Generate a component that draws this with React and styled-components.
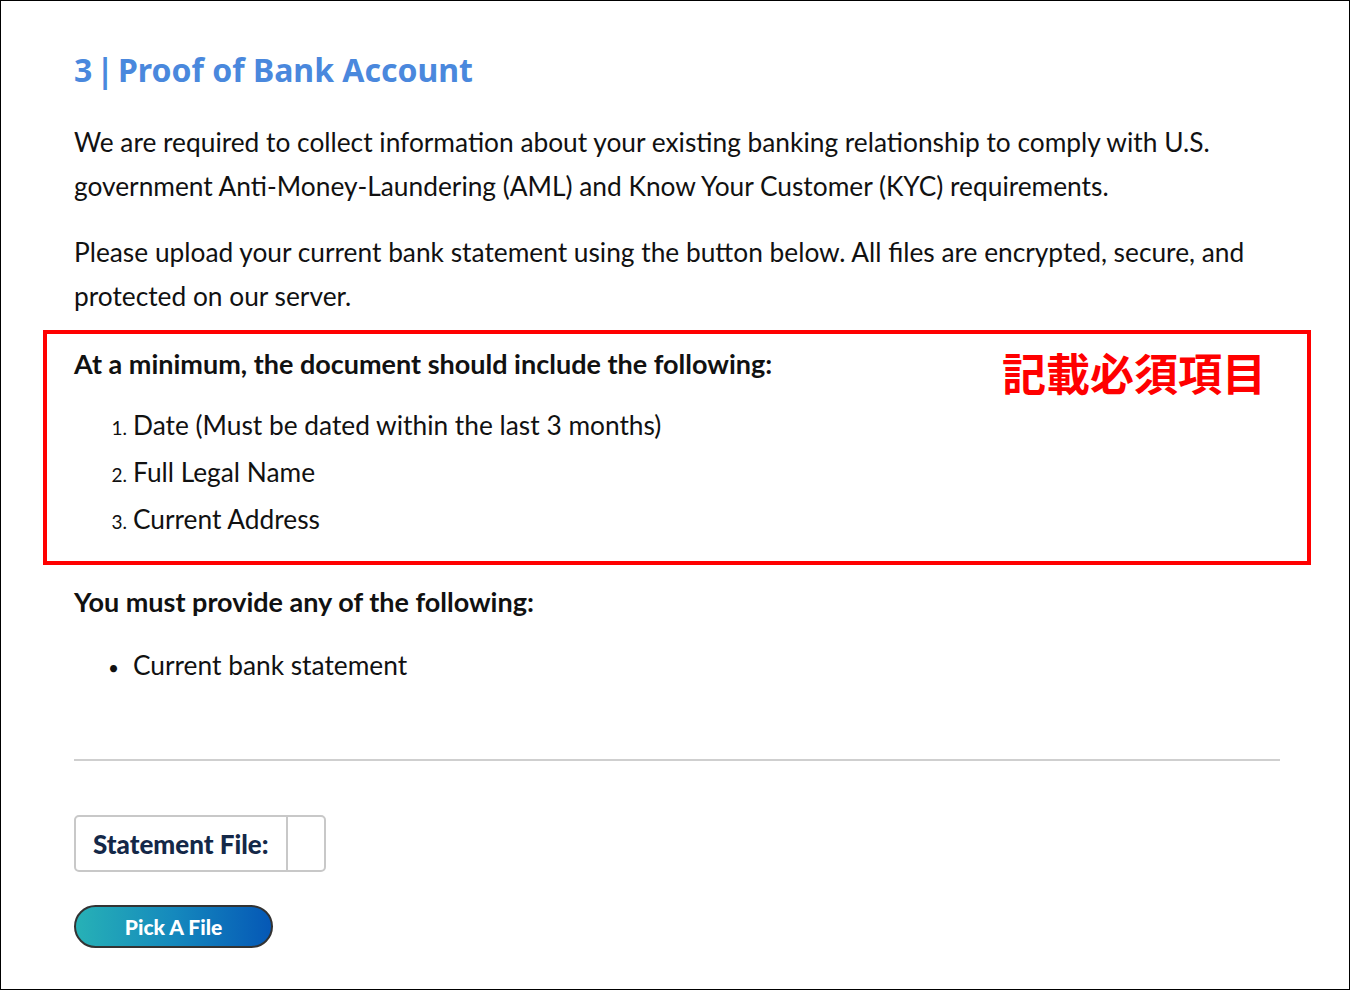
import React from "react";
import styled, { createGlobalStyle } from "styled-components";

const GlobalStyle = createGlobalStyle`
  html, body {
    margin: 0;
    padding: 0;
    background: #fff;
  }
  * { box-sizing: border-box; }
`;

const Page = styled.div`
  width: 1350px;
  height: 990px;
  border: 1px solid #000;
  padding: 43px 30px 0 73px;
  font-family: Lato, "Open Sans", sans-serif;
  color: #111;
  overflow: hidden;
`;

const Title = styled.h2`
  margin: 0 0 24px;
  font-family: "Noto Sans", Inter, sans-serif;
  font-weight: 700;
  font-size: 32px;
  line-height: 52px;
  color: #4a88dd;
`;

const Pipe = styled.span`
  margin: 0 4px;
`;

const Paragraph = styled.p`
  margin: 0 0 ${(p) => p.$gap || 22}px;
  font-size: 26.3px;
  line-height: 44px;
`;

const Highlight = styled.div`
  position: relative;
  margin: 0 8px 0 -31px;
  padding: 10px 27px 18px;
  border: 4px solid #ff0000;
`;

const Note = styled.div`
  position: absolute;
  top: 10px;
  right: 41px;
  font-family: "Noto Sans CJK JP", sans-serif;
  font-weight: 700;
  font-size: 44px;
  line-height: 56px;
  color: #ff0000;
`;

const Heading = styled.p`
  margin: 0 0 ${(p) => p.$gap || 18}px;
  font-size: 27px;
  font-weight: 700;
  line-height: 40px;
`;

const List = styled.ul`
  margin: 0;
  padding: 0;
  list-style: none;
`;

const Item = styled.li`
  display: flex;
  align-items: baseline;
  font-size: 26.3px;
  line-height: 47px;
`;

const Marker = styled.span`
  flex: none;
  width: 59px;
  padding-right: 6px;
  font-size: 19px;
  line-height: 1;
  text-align: ${(p) => (p.$bullet ? "left" : "right")};
  padding-left: ${(p) => (p.$bullet ? "34px" : "0")};
`;

const Section = styled.div`
  margin-top: 17px;
`;

const Rule = styled.hr`
  margin: 70px 39px 0 0;
  border: none;
  border-top: 2px solid #cfcfcf;
`;

const FileField = styled.div`
  display: inline-flex;
  align-items: stretch;
  height: 57px;
  margin-top: 54px;
  border: 2px solid #c8c8c8;
  border-radius: 5px;
`;

const FieldLabel = styled.div`
  display: flex;
  align-items: center;
  padding: 0 17px 0 17px;
  font-size: 26px;
  font-weight: 900;
  color: #142848;
  border-right: 2px solid #c8c8c8;
`;

const FieldValue = styled.div`
  width: 36px;
`;

const PickButton = styled.button`
  display: block;
  width: 199px;
  height: 43px;
  margin-top: 33px;
  border: 2px solid #333;
  border-radius: 22px;
  background: linear-gradient(90deg, #27b1b6 0%, #1589bd 50%, #0558b6 100%);
  color: #fff;
  font-family: Lato, sans-serif;
  font-weight: 900;
  font-size: 21px;
  cursor: pointer;
`;

const required = [
  "Date (Must be dated within the last 3 months)",
  "Full Legal Name",
  "Current Address",
];

export default function App() {
  return (
    <>
      <GlobalStyle />
      <Page>
        <Title>
          3<Pipe>|</Pipe>Proof of Bank Account
        </Title>
        <Paragraph>
          We are required to collect information about your existing banking relationship to comply with U.S.
          government Anti-Money-Laundering (AML) and Know Your Customer (KYC) requirements.
        </Paragraph>
        <Paragraph $gap={12}>
          Please upload your current bank statement using the button below. All files are encrypted, secure, and
          protected on our server.
        </Paragraph>
        <Highlight>
          <Note>記載必須項目</Note>
          <Heading>At a minimum, the document should include the following:</Heading>
          <List as="ol">
            {required.map((text, i) => (
              <Item key={text}>
                <Marker>{i + 1}.</Marker>
                {text}
              </Item>
            ))}
          </List>
        </Highlight>
        <Section>
          <Heading $gap={20}>You must provide any of the following:</Heading>
          <List>
            <Item>
              <Marker $bullet>•</Marker>
              Current bank statement
            </Item>
          </List>
        </Section>
        <Rule />
        <FileField>
          <FieldLabel>Statement File:</FieldLabel>
          <FieldValue />
        </FileField>
        <PickButton>Pick A File</PickButton>
      </Page>
    </>
  );
}
